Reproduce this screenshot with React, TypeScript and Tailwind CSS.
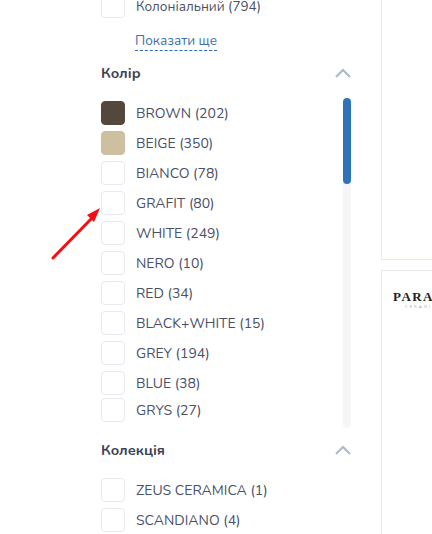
const COLORS = [
  { label: 'BROWN (202)', swatch: 'bg-[#54483c] border-[#54483c]' },
  { label: 'BEIGE (350)', swatch: 'bg-[#cdbf9f] border-[#cdbf9f]' },
  { label: 'BIANCO (78)' },
  { label: 'GRAFIT (80)' },
  { label: 'WHITE (249)' },
  { label: 'NERO (10)' },
  { label: 'RED (34)' },
  { label: 'BLACK+WHITE (15)' },
  { label: 'GREY (194)' },
  { label: 'BLUE (38)' },
]

function Row({ label, swatch, className = '', textClass = 'text-[14px]' }: { label: string; swatch?: string; className?: string; textClass?: string }) {
  return (
    <div className={`flex items-center h-6 ${className}`}>
      <span className={`w-6 h-6 rounded-[4px] border shrink-0 ${swatch ?? 'border-[#e9e9f0] bg-white'}`} />
      <span className={`ml-[11px] mt-[2px] leading-6 text-[#4a5068] whitespace-nowrap ${textClass}`}>{label}</span>
    </div>
  )
}

function Chevron() {
  return (
    <svg width="16" height="10" viewBox="0 0 16 10" fill="none" className="shrink-0">
      <path d="M1 9 L8 2 L15 9" stroke="#a9b9cc" strokeWidth="2" />
    </svg>
  )
}

export default function App() {
  return (
    <div className="relative flex w-[432px] h-[534px] overflow-hidden bg-white font-['Nunito','Lato','Noto_Sans',sans-serif]">
      {/* Filters */}
      <div className="w-[381px] h-full shrink-0 pl-[101px] pr-[30px] -mt-[6px]">
        <Row label="Колоніальний (794)" textClass="text-[13.5px]" />
        <a className="inline-block ml-[34px] mt-[13px] text-[13.5px] leading-[19px] text-[#3f6fa8] border-b border-dashed border-[#2f6fb5]">
          Показати ще
        </a>

        <div className="flex items-center justify-between mt-[9px] h-6">
          <h3 className="mt-[2px] text-[14.5px] font-bold text-[#3c4154]">Колір</h3>
          <Chevron />
        </div>

        <div className="relative mt-[13px] h-[330px]">
          <div className="pt-[3px] flex flex-col">
            {COLORS.map((c) => (
              <Row key={c.label} label={c.label} swatch={c.swatch} className="mb-[6px]" />
            ))}
            <Row label="GRYS (27)" className="-mt-[3px]" />
          </div>
          <div className="absolute right-0 top-0 w-2 h-[330px] rounded-full bg-[#f6f6f6]">
            <div className="w-2 h-[86px] rounded-full bg-[#2f74b9]" />
          </div>
        </div>

        <div className="flex items-center justify-between mt-[10px] h-6">
          <h3 className="mt-[2px] text-[14.5px] font-bold text-[#3c4154]">Колекція</h3>
          <Chevron />
        </div>
        <div className="mt-[16px] flex flex-col gap-[6px]">
          <Row label="ZEUS CERAMICA (1)" />
          <Row label="SCANDIANO (4)" />
        </div>
      </div>

      {/* Product cards, cut off by the window */}
      <div className="flex-1 flex flex-col">
        <div className="h-[260px] border-l border-b border-[#e8e8ee]" />
        <div className="mt-[10px] flex-1 border-l border-t border-[#e8e8ee] pl-[11px] pt-[19px]">
          <div className="font-['Liberation_Serif',serif] font-bold text-[13px] leading-[13px] tracking-[1.4px] text-[#222] whitespace-nowrap">PARADISO</div>
          <div className="text-[4px] leading-[5px] tracking-[2px] text-[#aaa] ml-[12px] mt-[1px] whitespace-nowrap">CERAMICA</div>
        </div>
      </div>

      {/* Annotation arrow */}
      <svg className="absolute left-[48px] top-[204px]" width="58" height="58" viewBox="0 0 58 58" fill="none">
        <path d="M5 54 L44 14" stroke="#f50f14" strokeWidth="3" strokeLinecap="round" />
        <path d="M52 4 L39 11 L46 18 Z" fill="#f50f14" />
      </svg>
    </div>
  )
}
